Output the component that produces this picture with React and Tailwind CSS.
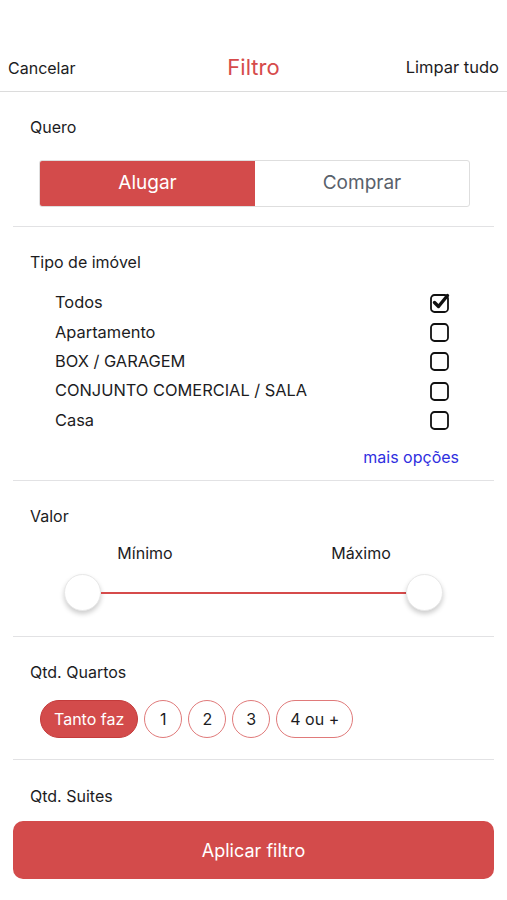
import React from "react";

const TIPOS = [
  { label: "Todos", checked: true },
  { label: "Apartamento" },
  { label: "BOX / GARAGEM" },
  { label: "CONJUNTO COMERCIAL / SALA" },
  { label: "Casa" },
];

const QUARTOS = ["Tanto faz", "1", "2", "3", "4 ou +"];

function Checkbox({ checked }) {
  return (
    <svg width="22" height="22" viewBox="0 0 22 22" className="flex-shrink-0">
      <rect x="2" y="3" width="17" height="17" rx="3.5" fill="none" stroke="#111" strokeWidth="1.8" />
      {checked && (
        <path d="M5.5 10.5 L9.5 14.5 L18.5 3.5" fill="none" stroke="#111" strokeWidth="3.4" strokeLinecap="round" strokeLinejoin="round" />
      )}
    </svg>
  );
}

function Divider() {
  return <div className="mx-[13px] h-px bg-[#e2e2e4]" />;
}

export default function App() {
  return (
    <div className="w-[507px] h-[900px] bg-white text-[#1c1c1e] flex flex-col overflow-hidden" style={{ fontFamily: "Inter, 'Open Sans', sans-serif" }}>
      {/* Header */}
      <div className="h-[92px] flex items-center pt-[44px] px-2 border-b border-[#dcdcdc]">
        <div className="flex-1 text-[16px]">Cancelar</div>
        <div className="text-[22px] text-[#d64b4b]">Filtro</div>
        <div className="flex-1 text-right text-[16.5px]">Limpar tudo</div>
      </div>

      {/* Quero */}
      <div className="pt-[24px] pb-[19px] px-[30px]">
        <div className="text-[16px] leading-[22px]">Quero</div>
        <div className="mt-[22px] ml-[9px] w-[431px] h-[47px] flex rounded-[3px] border border-[#dedede] overflow-hidden">
          <div className="w-[215px] bg-[#d34b4b] text-white text-[19px] flex items-center justify-center">Alugar</div>
          <div className="flex-1 text-[#59616b] text-[19px] flex items-center justify-center">Comprar</div>
        </div>
      </div>
      <Divider />

      {/* Tipo de imovel */}
      <div className="pt-[24px] pb-[11px] px-[30px]">
        <div className="text-[16px] leading-[22px]">Tipo de imóvel</div>
        <div className="mt-[15px] pl-[25px] pr-[26px] flex flex-col">
          {TIPOS.map((t) => (
            <div key={t.label} className="h-[29.3px] flex items-center justify-between">
              <span className="text-[16.4px]">{t.label}</span>
              <Checkbox checked={t.checked} />
            </div>
          ))}
        </div>
        <div className="mt-[11px] text-right pr-[18px] text-[16px] text-[#2f2fe0]">mais opções</div>
      </div>
      <Divider />

      {/* Valor */}
      <div className="pt-[24px] pb-[25px] px-[30px]">
        <div className="text-[16px] leading-[22px]">Valor</div>
        <div className="mt-[14px] flex text-[16px]">
          <div className="w-[230px] text-center">Mínimo</div>
          <div className="w-[202px] text-center">Máximo</div>
        </div>
        <div className="mt-[9px] ml-[34px] w-[379px] flex items-center">
          <div className="w-[37px] h-[37px] rounded-full bg-white border border-[#e8e8e8] shadow-[0_3px_5px_rgba(0,0,0,0.2)]" />
          <div className="flex-1 h-[2px] bg-[#d64b4b]" />
          <div className="w-[37px] h-[37px] rounded-full bg-white border border-[#e8e8e8] shadow-[0_3px_5px_rgba(0,0,0,0.2)]" />
        </div>
      </div>
      <Divider />

      {/* Qtd Quartos */}
      <div className="pt-[24px] pb-[21px] px-[30px]">
        <div className="text-[16px] leading-[22px]">Qtd. Quartos</div>
        <div className="mt-[17px] ml-[10px] flex gap-[6px]">
          {QUARTOS.map((q, i) => (
            <div
              key={q}
              className={
                i === 0
                  ? "h-[38px] px-[13px] rounded-full bg-[#d34b4b] border border-[#c43b3b] text-white text-[16px] flex items-center"
                  : q.length > 1
                  ? "h-[38px] px-[13px] rounded-full border border-[#e07a7a] text-[16px] flex items-center"
                  : "h-[38px] w-[38px] rounded-full border border-[#e07a7a] text-[16px] flex items-center justify-center"
              }
            >
              {q}
            </div>
          ))}
        </div>
      </div>
      <Divider />

      {/* Qtd Suites */}
      <div className="pt-[25px] px-[30px]">
        <div className="text-[16px] leading-[22px]">Qtd. Suites</div>
      </div>

      <div className="mt-[14px] mx-[13px] h-[58px] rounded-[10px] bg-[#d34b4b] text-white text-[18px] flex items-center justify-center">
        Aplicar filtro
      </div>
    </div>
  );
}
